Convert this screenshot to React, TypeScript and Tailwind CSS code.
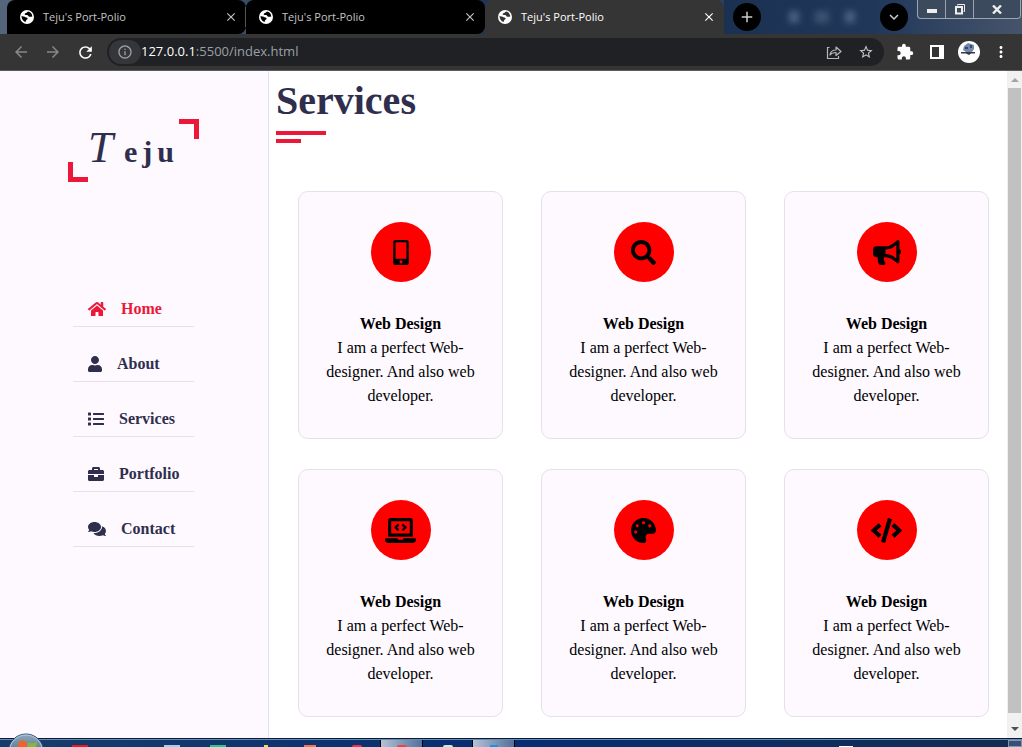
import React from "react";
import type { IconType } from "react-icons";
import {
  FaBriefcase,
  FaBullhorn,
  FaCode,
  FaComments,
  FaHome,
  FaLaptopCode,
  FaList,
  FaMobileAlt,
  FaPalette,
  FaSearch,
  FaUser,
} from "react-icons/fa";
import {
  MdAdd,
  MdArrowBack,
  MdArrowForward,
  MdClose,
  MdExpandMore,
  MdExtension,
  MdInfoOutline,
  MdMoreVert,
  MdRefresh,
  MdStarBorder,
} from "react-icons/md";

const links: { label: string; icon: IconType; size: string; active?: boolean }[] = [
  { label: "Home", icon: FaHome, size: "h-4 w-[18px]", active: true },
  { label: "About", icon: FaUser, size: "h-4 w-3.5" },
  { label: "Services", icon: FaList, size: "h-4 w-4" },
  { label: "Portfolio", icon: FaBriefcase, size: "h-4 w-4" },
  { label: "Contact", icon: FaComments, size: "h-4 w-[18px]" },
];

const services: { icon: IconType; size: string }[] = [
  { icon: FaMobileAlt, size: "h-[25px] w-4" },
  { icon: FaSearch, size: "h-[25px] w-[25px]" },
  { icon: FaBullhorn, size: "h-[25px] w-7" },
  { icon: FaLaptopCode, size: "h-[25px] w-[31px]" },
  { icon: FaPalette, size: "h-[25px] w-[25px]" },
  { icon: FaCode, size: "h-[25px] w-[31px]" },
];

function Globe({ ink }: { ink: string }) {
  return (
    <svg viewBox="0 0 14 14" className="size-3.5 shrink-0" aria-hidden="true">
      <circle cx="7" cy="7" r="7" fill="#fff" />
      <path
        d="M1.500 5.800C2.500 6.600 4 6.300 4.900 7c.9.600 2.200.4 2.700 1.300.3.700-.6 1.300-1.200 1.700-.6.500-.5 1.300-.9 2C3.200 11.400 1.400 9 1.500 5.800z"
        fill={ink}
      />
      <path
        d="M7.800 1.600c-.2.900-1.200 1-1.900 1.400-.7.300-1.500.9-1.200 1.500.4.700 1.600.3 2.500.6.900.2 1 1.300 1.900 1.600 1 .3 2.200.2 3.200-.3C12.200 4 10.300 1.900 7.800 1.600z"
        fill={ink}
      />
    </svg>
  );
}

function Tab({ active, divider }: { active?: boolean; divider?: boolean }) {
  return (
    <div
      className={
        active
          ? "flex h-full w-[239px] items-center rounded-t-lg bg-[#353535] pr-2 pl-[13px] text-white"
          : "flex h-full w-[239px] items-center rounded-t-lg rounded-br-lg bg-black pr-2 pl-[13px] text-[#c4c4c4]"
      }
    >
      <Globe ink={active ? "#353535" : "#000"} />
      <span className="ml-[9px] flex-1 whitespace-nowrap">Teju's Port-Polio</span>
      <button aria-label="Close tab" className="flex size-3.5 items-center justify-center">
        <MdClose className="size-3.5" />
      </button>
      {divider && <span className="-mr-2 ml-[7px] h-5 w-px bg-[#555]" />}
    </div>
  );
}

function WindowControls() {
  return (
    <div className="flex h-[19px] self-start overflow-hidden rounded-b border border-t-0 border-[#9aa5b3] bg-[#3c4a5e] text-white">
      <button aria-label="Minimize" className="flex w-7 items-center justify-center border-r border-[#9aa5b3]">
        <span className="mt-1 h-1 w-2.5 bg-[#eee]" />
      </button>
      <button aria-label="Restore" className="flex w-7 items-center justify-center border-r border-[#9aa5b3]">
        <svg viewBox="0 0 12 12" className="size-3" fill="none" stroke="#eee">
          <path d="M3.500 2.500v-1h7v7h-1" />
          <path d="M2 4h6v6.500H2z" strokeWidth="2" />
        </svg>
      </button>
      <button aria-label="Close" className="flex w-[46px] items-center justify-center">
        <svg viewBox="0 0 10 9" className="h-[9px] w-2.5" stroke="#eee" strokeWidth="2.400">
          <path d="M1 0.500l8 8M9 0.500l-8 8" />
        </svg>
      </button>
    </div>
  );
}

function BrowserChrome() {
  return (
    <header className="shrink-0 bg-[#353535] font-['Open_Sans',sans-serif]">
      <div className="flex h-[34px] bg-linear-to-r from-[#55657c] via-[#1d3351] to-[#45536a] pl-[7px] text-[11px]">
        <Tab divider />
        <Tab />
        <Tab active />
        <div className="flex flex-1 items-center bg-linear-to-r from-[#1b3152] via-[#20375a] to-[#46546a] pl-[9px]">
          <button aria-label="New tab" className="flex size-7 items-center justify-center rounded-full bg-black text-[#ccc]">
            <MdAdd className="size-[18px]" />
          </button>
          <div className="ml-7 flex flex-1 gap-4 blur-[3px]" aria-hidden="true">
            <span className="h-3 w-2.5 bg-[#4a6080]" />
            <span className="h-3 w-3.5 bg-[#3b5272]" />
            <span className="h-3 w-2.5 bg-[#4a6080]" />
          </div>
          <button aria-label="Search tabs" className="flex size-7 items-center justify-center rounded-full bg-black text-[#ccc]">
            <MdExpandMore className="size-[18px]" />
          </button>
          <div className="ml-[9px] flex self-stretch pr-px">
            <WindowControls />
          </div>
        </div>
      </div>
      <div className="flex h-[37px] items-center border-b border-[#5e5b5f] pl-3 text-white">
        <button aria-label="Back" className="text-[#888]">
          <MdArrowBack className="size-[18px]" />
        </button>
        <button aria-label="Forward" className="ml-3.5 text-[#888]">
          <MdArrowForward className="size-[18px]" />
        </button>
        <button aria-label="Reload" className="ml-3.5">
          <MdRefresh className="size-[19px]" />
        </button>
        <div className="ml-3 flex h-7 flex-1 items-center rounded-full bg-[#202124]">
          <span className="ml-0.5 flex h-6 w-8 items-center justify-center rounded-full bg-[#35363a] text-[#9aa0a6]">
            <MdInfoOutline className="size-4" />
          </span>
          <p className="flex-1 text-[13px] text-[#9aa0a6]">
            <span className="text-white">127.0.0.1</span>:5500/index.html
          </p>
          <button aria-label="Share" className="mr-4">
            <svg viewBox="0 0 16 16" className="size-4" fill="none" stroke="#b8b8b8" strokeWidth="1.200">
              <path d="M3.500 3.500h-2v11h11V12" />
              <path d="M4 11c.5-3.500 2.500-5 6-5V3l5 4.500-5 4v-3C7.500 8.500 5.500 9 4 11z" strokeLinejoin="round" />
            </svg>
          </button>
          <button aria-label="Bookmark" className="mr-2.5 text-[#c8c8c8]">
            <MdStarBorder className="size-4" />
          </button>
        </div>
        <button aria-label="Extensions" className="ml-3">
          <MdExtension className="size-[18px]" />
        </button>
        <button aria-label="Side panel" className="ml-4">
          <svg viewBox="0 0 14 14" className="size-3.5">
            <path d="M0 0h14v14H0zM2 2v10h7V2z" fill="#fff" fillRule="evenodd" />
          </svg>
        </button>
        <button aria-label="Profile" className="ml-3.5">
          <svg viewBox="0 0 22 22" className="size-[22px]">
            <circle cx="11" cy="11" r="11" fill="#fff" />
            <path d="M6 5l4-3 3 1 3 1v4l-2 3H8L5 9z" fill="#7288ad" />
            <path d="M7 6h3v2H7zM12 4h2v3h-2z" fill="#344869" />
            <path d="M3 11h14v1.500h-4L11 14l-3-1.500H3z" fill="#333b48" />
          </svg>
        </button>
        <button aria-label="Menu" className="mr-3 ml-3">
          <MdMoreVert className="size-[18px]" />
        </button>
      </div>
    </header>
  );
}

function Sidebar() {
  return (
    <aside className="w-[269px] shrink-0 border-r border-[#e8dfec] bg-[#fdf9ff]">
      <div className="mt-12 pl-[68px]">
        <a
          href="#home"
          className="relative flex h-[63px] w-[131px] px-5 text-[30px] font-bold tracking-[5px]"
        >
          <span className="absolute top-0 right-0 size-5 border-t-5 border-r-5 border-[#ec1839]" />
          <span className="absolute bottom-0 left-0 size-5 border-b-5 border-l-5 border-[#ec1839]" />
          <span className="flex items-baseline pt-1.5">
            <span className="w-9 text-[45px] leading-none font-normal italic">T</span>
            <span>eju</span>
          </span>
        </a>
      </div>
      <nav className="mt-[110px] pl-[73px]">
        <ul className="flex w-[121px] flex-col gap-5">
          {links.map(({ label, icon: Icon, size, active }) => (
            <li key={label}>
              <a
                href={`#${label.toLowerCase()}`}
                className={
                  active
                    ? "flex h-[35px] items-center gap-[15px] border-b border-[#e8dfec] pl-[15px] font-bold text-[#ec1839]"
                    : "flex h-[35px] items-center gap-[15px] border-b border-[#e8dfec] pl-[15px] font-bold"
                }
              >
                <Icon className={size} />
                {label}
              </a>
            </li>
          ))}
        </ul>
      </nav>
    </aside>
  );
}

function ServiceCard({ icon: Icon, size }: { icon: IconType; size: string }) {
  return (
    <article className="rounded-[10px] border border-[#e8dfec] bg-[#fdf9ff] px-6 py-[30px] text-center leading-6 text-black">
      <div className="mx-auto mb-[30px] flex size-[60px] items-center justify-center rounded-full bg-[#ff0000]">
        <Icon className={size} />
      </div>
      <h4 className="font-bold">Web Design</h4>
      <p>I am a perfect Web-designer. And also web developer.</p>
    </article>
  );
}

function Scrollbar() {
  return (
    <div className="flex w-[15px] shrink-0 flex-col items-center bg-[#f1f1f1]" aria-hidden="true">
      <svg viewBox="0 0 15 17" className="h-[17px] w-[15px]">
        <path d="M4 11l4-4 4 4z" fill="#a3a3a3" />
      </svg>
      <span className="w-[13px] flex-1 bg-[#c1c1c1]" />
      <svg viewBox="0 0 15 25" className="h-[25px] w-[15px]">
        <path d="M4 14l4 4 4-4z" fill="#505050" />
      </svg>
    </div>
  );
}

function Taskbar() {
  return (
    <footer className="h-[9px] shrink-0 overflow-hidden border-t border-[#0b1a30]">
      <div className="flex h-full border-t border-[#6d8cb5] bg-linear-to-r from-[#173c6c] via-[#062d72] to-[#122d52]">
        <div className="flex w-[380px] shrink-0 items-end pl-[72px]">
          <span className="h-0.5 w-4 bg-[#f01818]" />
          <span className="ml-[76px] h-0.5 w-4 bg-[#a9cdea]" />
          <span className="ml-[30px] h-0.5 w-4 bg-[#28c98c]" />
          <span className="ml-[38px] h-0.5 w-1 bg-[#f3dc4d]" />
          <span className="ml-9 h-0.5 w-3 bg-[#f07850]" />
          <span className="ml-9 h-0.5 w-2.5 rounded-t bg-[#f03050]" />
        </div>
        <div className="flex w-[43px] items-end justify-center border-x border-black bg-linear-to-r from-[#b4c2d5] to-[#52719e]">
          <span className="h-0.5 w-2.5 rounded-t bg-[#e44]" />
        </div>
        <div className="flex w-[49px] items-end justify-center">
          <span className="h-0.5 w-2.5 rounded-t bg-[#cfe8d5]" />
        </div>
        <div className="flex w-[43px] items-end justify-center border-x border-black bg-linear-to-r from-[#b4c2d5] to-[#52719e]">
          <span className="h-0.5 w-2 bg-[#1496e8]" />
        </div>
        <div className="flex flex-1 items-end justify-end pr-[155px]">
          <span className="h-px w-3.5 bg-white" />
        </div>
        <span className="w-3.5 border border-[#8195b0] bg-[#354f78]" />
      </div>
    </footer>
  );
}

function StartButton() {
  return (
    <button aria-label="Start" className="absolute bottom-0 left-2 h-3.5 w-9 overflow-hidden">
      <svg viewBox="0 0 36 14" className="h-3.5 w-9">
        <defs>
          <linearGradient id="orb" x1="0" y1="0" x2="0" y2="1">
            <stop offset="0" stopColor="#93a8ba" />
            <stop offset="0.5" stopColor="#517a98" />
          </linearGradient>
        </defs>
        <circle cx="18" cy="18.500" r="17.500" fill="url(#orb)" stroke="#245078" />
        <circle cx="18" cy="18.500" r="16.500" fill="none" stroke="#b9cbd8" />
        <path d="M11 9c2-2 5-2 8 0l-1 6h-9z" fill="#ee6326" />
        <path d="M20 9.500c3 1.500 6 1 9-1l-1 6h-9z" fill="#86b83c" />
      </svg>
    </button>
  );
}

export default function App() {
  return (
    <div className="relative flex h-screen flex-col overflow-hidden bg-white font-['Liberation_Serif',serif] text-base text-[#302e4d]">
      <BrowserChrome />
      <div className="flex min-h-0 flex-1">
        <Sidebar />
        <main className="min-w-0 flex-1 overflow-hidden">
          <div className="pt-1 pl-[7px]">
            <h2 className="text-[40px] leading-[52px] font-bold">Services</h2>
            <div className="mt-1 h-1 w-[50px] bg-[#ec1839]" />
            <div className="mt-1 h-1 w-[25px] bg-[#ec1839]" />
          </div>
          <section className="mt-12 grid grid-cols-3 gap-x-[38px] gap-y-[30px] pr-[18px] pl-[29px]">
            {services.map((service, index) => (
              <ServiceCard key={index} {...service} />
            ))}
          </section>
        </main>
        <Scrollbar />
      </div>
      <Taskbar />
      <StartButton />
    </div>
  );
}
